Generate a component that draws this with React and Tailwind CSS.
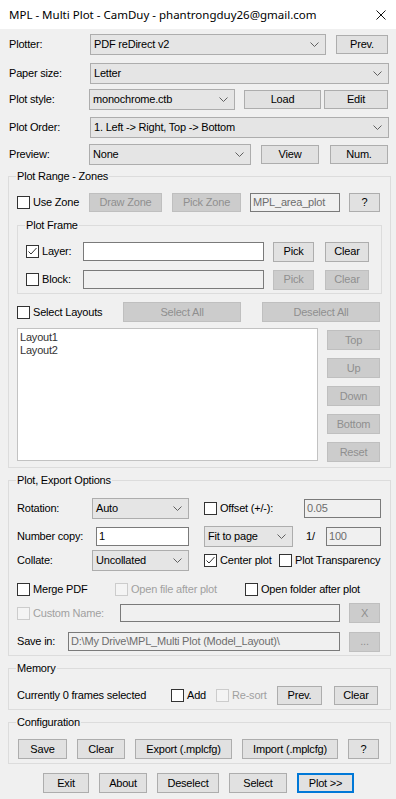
import clsx from 'clsx'

function Btn({ className, disabled, primary, children }) {
  return (
    <div
      className={clsx(
        'flex items-center justify-center shrink-0',
        disabled
          ? 'bg-[#cccccc] border border-[#bfbfbf] text-[#8f8f8f]'
          : primary
            ? 'bg-[#e1e1e1] border-2 border-[#0078d7]'
            : 'bg-[#e1e1e1] border border-[#adadad]',
        className
      )}
    >
      {children}
    </div>
  )
}

function Combo({ className, children }) {
  return (
    <div
      className={clsx(
        'flex items-center justify-between shrink-0 bg-[#e5e5e5] border border-[#adadad] pl-[3px] pr-[6px]',
        className
      )}
    >
      <span>{children}</span>
      <svg width="9" height="5" viewBox="0 0 9 5">
        <path d="M0.5 0.5 L4.5 4.5 L8.5 0.5" fill="none" stroke="#606060" strokeWidth="1" />
      </svg>
    </div>
  )
}

function Check({ checked, disabled }) {
  return (
    <div
      className={clsx(
        'w-[13px] h-[13px] shrink-0 border',
        disabled ? 'border-[#cccccc] bg-[#f4f4f4]' : 'border-[#333333] bg-white'
      )}
    >
      {checked && (
        <svg width="11" height="11" viewBox="0 0 11 11">
          <path d="M1.5 5.5 L4 8 L9.5 2" fill="none" stroke="#333" strokeWidth="1" />
        </svg>
      )}
    </div>
  )
}

function TextBox({ className, disabled, children }) {
  return (
    <div
      className={clsx(
        'flex items-center shrink-0 border border-[#7a7a7a] pl-[2px] whitespace-nowrap overflow-hidden',
        disabled ? 'bg-[#f0f0f0] text-[#6d6d6d]' : 'bg-white',
        className
      )}
    >
      {children}
    </div>
  )
}

function Group({ title, className, children }) {
  return (
    <div className={clsx('relative border border-[#dcdcdc]', className)}>
      <span className="absolute left-[7px] top-[-7px] bg-[#f0f0f0] px-[1px] leading-[13px]">{title}</span>
      {children}
    </div>
  )
}

export default function App() {
  return (
    <div className="w-[396px] h-[799px] overflow-hidden bg-[#f0f0f0] text-[11px] leading-[13px] tracking-[-0.2px] text-black font-['Liberation_Sans',Arial,sans-serif]">
      {/* title bar */}
      <div className="h-[29px] bg-white flex items-center justify-between pl-[9px] pr-[10px]">
        <span className="text-[11.5px] tracking-normal font-['Noto_Sans',sans-serif] text-black">
          MPL - Multi Plot - CamDuy - phantrongduy26@gmail.com
        </span>
        <svg width="10" height="10" viewBox="0 0 10 10">
          <path d="M0.5 0.5 L9.5 9.5 M9.5 0.5 L0.5 9.5" stroke="#111" strokeWidth="1" />
        </svg>
      </div>

      {/* top settings */}
      <div className="flex items-center h-[21px] mt-[5px] pl-[9px]">
        <div className="w-[81px]">Plotter:</div>
        <Combo className="w-[236px] h-[21px]">PDF reDirect v2</Combo>
        <Btn className="ml-[10px] w-[52px] h-[19px]">Prev.</Btn>
      </div>
      <div className="flex items-center h-[21px] mt-[8px] pl-[9px]">
        <div className="w-[81px]">Paper size:</div>
        <Combo className="w-[299px] h-[21px]">Letter</Combo>
      </div>
      <div className="flex items-center h-[21px] mt-[5px] pl-[9px]">
        <div className="w-[80px]">Plot style:</div>
        <Combo className="w-[146px] h-[21px]">monochrome.ctb</Combo>
        <Btn className="ml-[9px] w-[77px] h-[19px]">Load</Btn>
        <Btn className="ml-[3px] w-[64px] h-[19px]">Edit</Btn>
      </div>
      <div className="flex items-center h-[21px] mt-[7px] pl-[9px]">
        <div className="w-[81px]">Plot Order:</div>
        <Combo className="w-[299px] h-[21px]">1. Left -&gt; Right, Top -&gt; Bottom</Combo>
      </div>
      <div className="flex items-center h-[21px] mt-[6px] pl-[9px]">
        <div className="w-[80px]">Preview:</div>
        <Combo className="w-[162px] h-[21px]">None</Combo>
        <Btn className="ml-[10px] w-[58px] h-[19px]">View</Btn>
        <Btn className="ml-[11px] w-[58px] h-[19px]">Num.</Btn>
      </div>

      {/* plot range */}
      <Group title="Plot Range - Zones" className="mt-[11px] ml-[8px] w-[383px] pb-[5px]">
        <div className="flex items-center h-[21px] mt-[15px] pl-[8px]">
          <Check />
          <div className="w-[59px] pl-[3px]">Use Zone</div>
          <Btn disabled className="w-[73px] h-[19px]">Draw Zone</Btn>
          <Btn disabled className="ml-[10px] w-[69px] h-[19px]">Pick Zone</Btn>
          <TextBox disabled className="ml-[9px] w-[90px] h-[19px]">MPL_area_plot</TextBox>
          <Btn className="ml-[9px] w-[31px] h-[19px]">?</Btn>
        </div>

        <Group title="Plot Frame" className="mt-[12px] ml-[8px] w-[365px] pb-[3px]">
          <div className="flex items-center h-[21px] mt-[15px] pl-[8px]">
            <Check checked />
            <div className="w-[44px] pl-[3px]">Layer:</div>
            <TextBox className="w-[181px] h-[19px]" />
            <Btn className="ml-[9px] w-[41px] h-[20px]">Pick</Btn>
            <Btn className="ml-[11px] w-[44px] h-[20px]">Clear</Btn>
          </div>
          <div className="flex items-center h-[21px] mt-[7px] pl-[8px]">
            <Check />
            <div className="w-[44px] pl-[3px]">Block:</div>
            <TextBox disabled className="w-[181px] h-[19px]" />
            <Btn disabled className="ml-[9px] w-[41px] h-[20px]">Pick</Btn>
            <Btn disabled className="ml-[11px] w-[44px] h-[20px]">Clear</Btn>
          </div>
        </Group>

        <div className="flex items-center h-[20px] mt-[8px] pl-[8px]">
          <Check />
          <div className="w-[93px] pl-[3px]">Select Layouts</div>
          <Btn disabled className="w-[118px] h-[20px]">Select All</Btn>
          <Btn disabled className="ml-[21px] w-[118px] h-[20px]">Deselect All</Btn>
        </div>

        <div className="flex mt-[6px] pl-[8px]">
          <div className="w-[301px] h-[133px] bg-white border border-[#c2c2c2] pl-[2px] pt-[2px] text-[#333]">
            <div>Layout1</div>
            <div>Layout2</div>
          </div>
          <div className="ml-[9px] pt-[2px] flex flex-col gap-[8px]">
            <Btn disabled className="w-[53px] h-[20px]">Top</Btn>
            <Btn disabled className="w-[53px] h-[20px]">Up</Btn>
            <Btn disabled className="w-[53px] h-[20px]">Down</Btn>
            <Btn disabled className="w-[53px] h-[20px]">Bottom</Btn>
            <Btn disabled className="w-[53px] h-[20px]">Reset</Btn>
          </div>
        </div>
      </Group>

      {/* plot, export options */}
      <Group title="Plot, Export Options" className="mt-[12px] ml-[8px] w-[383px] pb-[3px]">
        <div className="flex items-center h-[21px] mt-[17px] pl-[8px]">
          <div className="w-[75px]">Rotation:</div>
          <Combo className="w-[97px] h-[21px]">Auto</Combo>
          <div className="ml-[15px]"><Check /></div>
          <div className="w-[87px] pl-[3px]">Offset (+/-):</div>
          <TextBox disabled className="w-[77px] h-[19px]">0.05</TextBox>
        </div>
        <div className="flex items-center h-[22px] mt-[6px] pl-[8px]">
          <div className="w-[79px]">Number copy:</div>
          <TextBox className="w-[93px] h-[19px]">1</TextBox>
          <Combo className="ml-[15px] w-[89px] h-[21px]">Fit to page</Combo>
          <div className="w-[33px] pl-[13px]">1/</div>
          <TextBox disabled className="w-[55px] h-[19px]">100</TextBox>
        </div>
        <div className="flex items-center h-[21px] mt-[3px] pl-[8px]">
          <div className="w-[75px]">Collate:</div>
          <Combo className="w-[97px] h-[21px]">Uncollated</Combo>
          <div className="ml-[15px]"><Check checked /></div>
          <div className="w-[62px] pl-[3px]">Center plot</div>
          <Check />
          <div className="pl-[3px]">Plot Transparency</div>
        </div>
        <div className="flex items-center h-[17px] mt-[10px] pl-[8px]">
          <Check />
          <div className="w-[85px] pl-[3px]">Merge PDF</div>
          <Check disabled />
          <div className="w-[117px] pl-[3px] text-[#a0a0a0]">Open file after plot</div>
          <Check />
          <div className="pl-[3px]">Open folder after plot</div>
        </div>
        <div className="flex items-center h-[20px] mt-[5px] pl-[8px]">
          <Check disabled />
          <div className="w-[90px] pl-[3px] text-[#a0a0a0]">Custom Name:</div>
          <TextBox disabled className="w-[220px] h-[18px]" />
          <Btn disabled className="ml-[9px] w-[31px] h-[20px]">X</Btn>
        </div>
        <div className="flex items-center h-[21px] mt-[8px] pl-[8px]">
          <div className="w-[51px]">Save in:</div>
          <TextBox disabled className="w-[272px] h-[19px]">
            {'D:\\My Drive\\MPL_Multi Plot (Model_Layout)\\'}
          </TextBox>
          <Btn disabled className="ml-[9px] w-[31px] h-[20px]">...</Btn>
        </div>
      </Group>

      {/* memory */}
      <Group title="Memory" className="mt-[12px] ml-[8px] w-[383px] pb-[4px]">
        <div className="flex items-center h-[20px] mt-[16px] pl-[8px]">
          <div className="w-[154px]">Currently 0 frames selected</div>
          <Check />
          <div className="w-[32px] pl-[3px]">Add</div>
          <Check disabled />
          <div className="w-[48px] pl-[3px] text-[#a0a0a0]">Re-sort</div>
          <Btn className="w-[45px] h-[19px]">Prev.</Btn>
          <Btn className="ml-[12px] w-[44px] h-[19px]">Clear</Btn>
        </div>
      </Group>

      {/* configuration */}
      <Group title="Configuration" className="mt-[12px] ml-[8px] w-[383px] pb-[4px]">
        <div className="flex items-center h-[20px] mt-[16px] pl-[9px]">
          <Btn className="w-[49px] h-[20px]">Save</Btn>
          <Btn className="ml-[10px] w-[48px] h-[20px]">Clear</Btn>
          <Btn className="ml-[10px] w-[97px] h-[20px]">Export (.mplcfg)</Btn>
          <Btn className="ml-[10px] w-[96px] h-[20px]">Import (.mplcfg)</Btn>
          <Btn className="ml-[10px] w-[31px] h-[20px]">?</Btn>
        </div>
      </Group>

      {/* bottom actions */}
      <div className="flex items-center h-[20px] mt-[9px] pl-[43px]">
        <Btn className="w-[46px] h-[20px]">Exit</Btn>
        <Btn className="ml-[10px] w-[48px] h-[20px]">About</Btn>
        <Btn className="ml-[10px] w-[62px] h-[20px]">Deselect</Btn>
        <Btn className="ml-[10px] w-[58px] h-[20px]">Select</Btn>
        <Btn primary className="ml-[10px] w-[57px] h-[20px]">Plot &gt;&gt;</Btn>
      </div>
    </div>
  )
}
